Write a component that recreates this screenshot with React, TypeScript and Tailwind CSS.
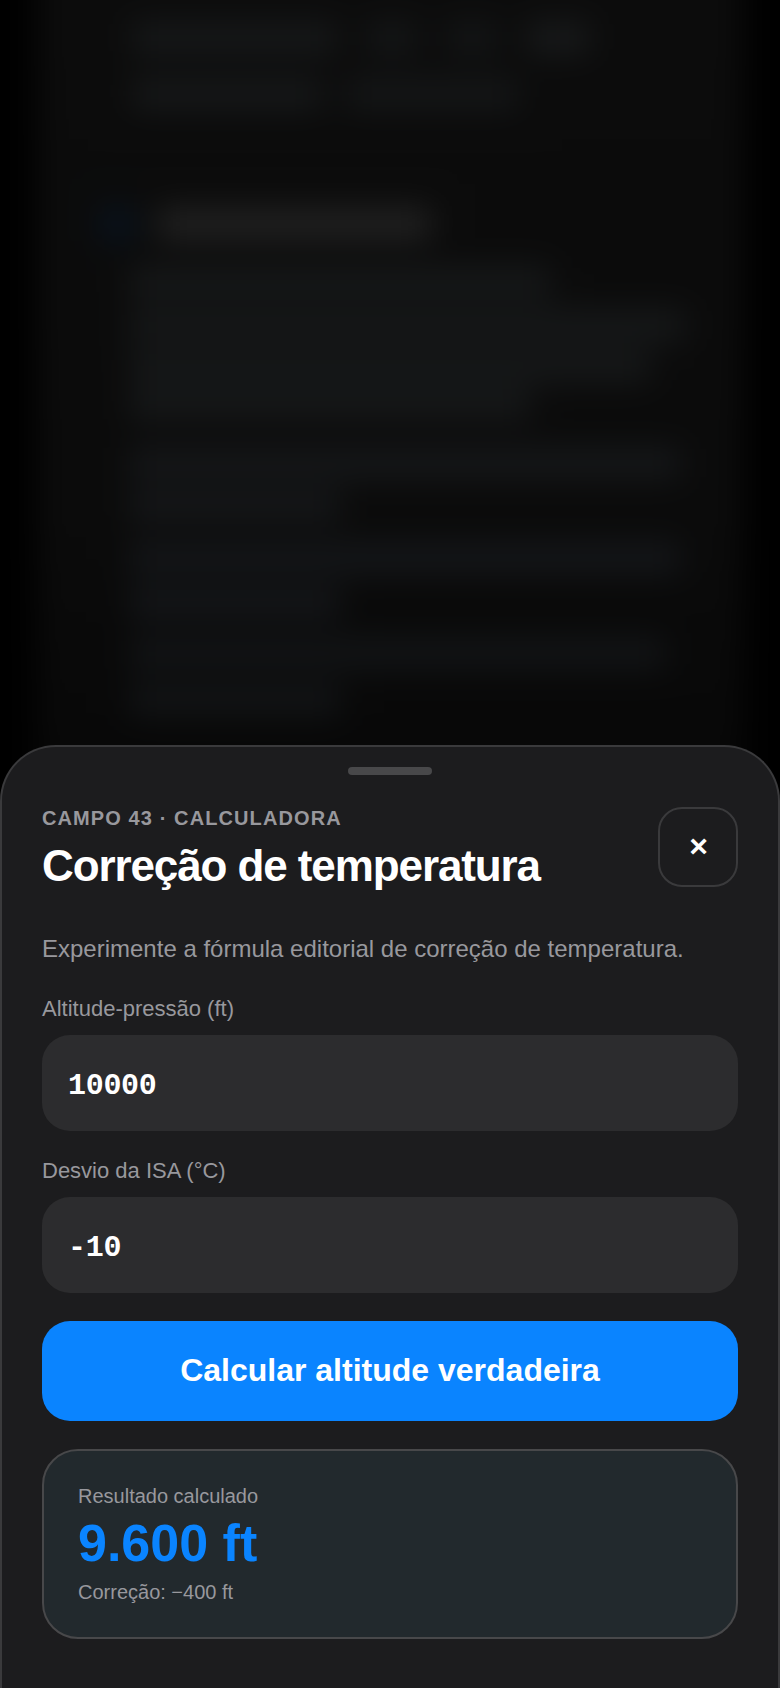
const sans = "font-['Liberation_Sans',Arial,sans-serif]";

function BlurredArticle() {
  return (
    <div className="mx-[36px] -mt-[40px] h-[1100px] bg-gradient-to-b from-[#0c0c0c] via-[#0b0b0b] to-[#050505] pl-[96px] pr-[60px] pt-[63px] blur-[16px]">
      <div className="flex h-[30px] gap-[30px]">
        <div className="w-[205px] bg-[#17191a]" />
        <div className="w-[50px] bg-[#151718]" />
        <div className="w-[50px] bg-[#141617]" />
        <div className="w-[62px] bg-[#191b1c]" />
      </div>
      <div className="mt-[26px] flex h-[30px] gap-[24px]">
        <div className="w-[190px] bg-[#17191a]" />
        <div className="w-[172px] bg-[#151718]" />
      </div>
      <div className="-ml-[32px] mt-[100px] flex h-[30px] items-center gap-[23px]">
        <div className="h-[34px] w-[34px] rounded-lg bg-[#081320]" />
        <div className="h-[30px] w-[274px] bg-[#232323]" />
      </div>
      <div className="-ml-[2px] mt-[28px] flex flex-col">
        <div className="h-[30px] w-[420px] bg-[#17191a]" />
        <div className="mt-[13px] h-[30px] w-[555px] bg-[#17191a]" />
        <div className="mt-[11px] h-[30px] w-[520px] bg-[#17191a]" />
        <div className="mt-[8px] h-[30px] w-[400px] bg-[#17191a]" />
        <div className="mt-[29px] h-[30px] w-[550px] bg-[#16181a]" />
        <div className="mt-[13px] h-[30px] w-[210px] bg-[#16181a]" />
        <div className="mt-[22px] h-[30px] w-[550px] bg-[#15171a]" />
        <div className="mt-[15px] h-[30px] w-[210px] bg-[#15171a]" />
        <div className="mt-[20px] h-[30px] w-[535px] bg-[#131517]" />
        <div className="mt-[17px] h-[30px] w-[210px] bg-[#131517]" />
      </div>
    </div>
  );
}

function Field({ label, value, className }: { label: string; value: string; className?: string }) {
  return (
    <label className={`block ${className ?? ""}`}>
      <span className="block text-[22px] leading-[26px] text-[#98989d]">{label}</span>
      <input
        readOnly
        value={value}
        className="mt-[13px] block h-[96px] w-full rounded-[28px] bg-[#2c2c2e] px-[26px] pt-[6px] font-['Liberation_Mono',monospace] text-[30px] font-bold tracking-[-0.3px] text-white outline-none"
      />
    </label>
  );
}

export default function App() {
  return (
    <div className={`relative h-[1688px] overflow-hidden bg-black ${sans}`}>
      <BlurredArticle />

      <div className="absolute inset-x-0 bottom-0 h-[943px] rounded-t-[56px] border-2 border-b-0 border-[#3a3a3c] bg-[#1c1c1e] px-[40px]">
        <div className="mx-auto mt-[20px] h-[8px] w-[84px] rounded-full bg-[#48484a]" />

        <div className="mt-[32px] flex items-start justify-between">
          <div>
            <p className="text-[20px] font-bold leading-[22px] tracking-[1.1px] text-[#98989d]">
              CAMPO 43 · CALCULADORA
            </p>
            <h1 className="mt-[9px] text-[44px] font-bold leading-[56px] tracking-[-1.1px] text-white">
              Correção de temperatura
            </h1>
          </div>
          <button className="flex h-[80px] w-[80px] items-center justify-center rounded-[24px] border-2 border-[#3a3a3c] pb-[3px] pl-[1px] text-[32px] font-bold leading-none text-white">
            ×
          </button>
        </div>

        <p className="mt-[37px] text-[24px] leading-[36px] text-[#98989d]">
          Experimente a fórmula editorial de correção de temperatura.
        </p>

        <Field label="Altitude-pressão (ft)" value="10000" className="mt-[29px]" />
        <Field label="Desvio da ISA (°C)" value="-10" className="mt-[27px]" />

        <button className="mt-[28px] block h-[100px] w-full rounded-[28px] bg-[#0a84ff] pb-[2px] text-[32px] font-bold text-white">
          Calcular altitude verdadeira
        </button>

        <div className="mt-[28px] h-[190px] rounded-[36px] border-2 border-[#48484a] bg-[#22292d] px-[34px] pt-[32px]">
          <p className="text-[20px] leading-[26px] text-[#98989d]">Resultado calculado</p>
          <p className="mt-[2px] text-[52px] font-bold leading-[64px] text-[#0a84ff]">9.600 ft</p>
          <p className="mt-[4px] text-[20px] leading-[26px] text-[#98989d]">Correção: −400 ft</p>
        </div>
      </div>
    </div>
  );
}
